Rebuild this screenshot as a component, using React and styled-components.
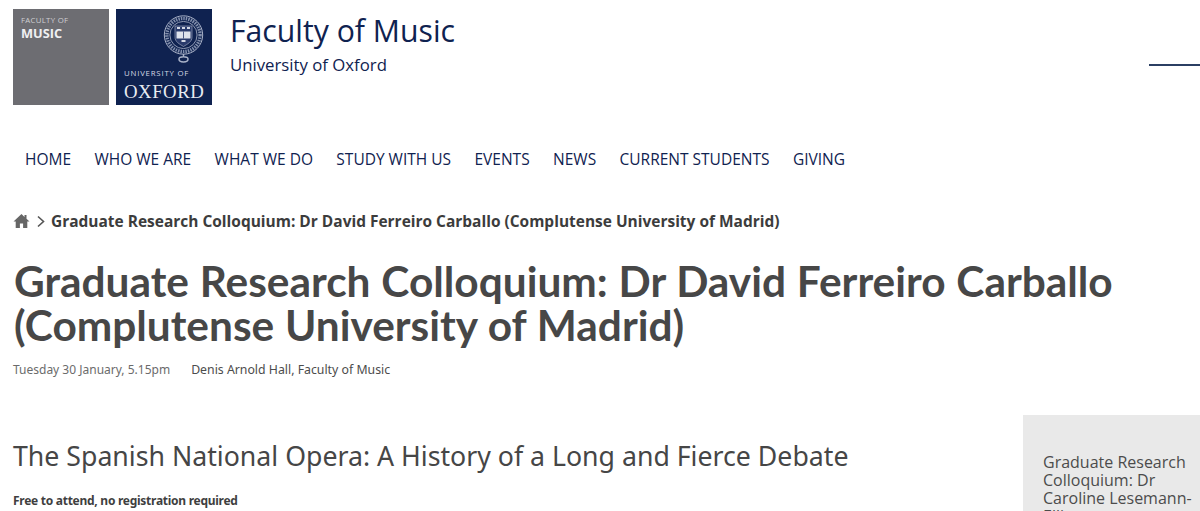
import React from "react";
import styled, { createGlobalStyle } from "styled-components";

const Global = createGlobalStyle`
  html, body {
    margin: 0;
    height: 511px;
    overflow: hidden;
    background: #fff;
    font-family: "Open Sans", sans-serif;
  }
`;

const Page = styled.div`
  width: 1200px;
  height: 511px;
  overflow: hidden;
`;

const Header = styled.header`
  display: flex;
  align-items: flex-start;
  height: 106px;
  padding: 9px 0 0 13px;
  box-sizing: border-box;
`;

const LogoTile = styled.div`
  width: 96px;
  height: 96px;
  margin-right: 7px;
  box-sizing: border-box;
  flex: none;
  background: ${({ wide }) => (wide ? "#0f2250" : "#6d6d72")};
  color: #fff;
  display: flex;
  flex-direction: column;
`;

const FacultyLine = styled.span`
  font-family: "Open Sans", sans-serif;
  font-size: 7.8px;
  line-height: 10px;
  letter-spacing: 0.3px;
  color: #cfcfd2;
  padding: 6px 0 0 8px;
`;

const MusicLine = styled.span`
  font-family: "Open Sans", sans-serif;
  font-weight: 700;
  font-size: 12.8px;
  line-height: 14px;
  color: #f0f0f2;
  padding: 1px 0 0 8px;
`;

const Crest = styled.svg`
  display: block;
  width: 41px;
  height: 48px;
  margin: 6px 0 0 47px;
`;

const UniLine = styled.span`
  font-family: "Open Sans", sans-serif;
  font-size: 7.8px;
  line-height: 9px;
  letter-spacing: 0.8px;
  color: #d5d9e4;
  padding: 6px 0 0 8px;
  white-space: nowrap;
`;

const OxfordLine = styled.span`
  font-family: "Liberation Serif", serif;
  font-size: 18.8px;
  line-height: 17px;
  letter-spacing: 0.5px;
  color: #e8ebf2;
  padding: 5px 0 0 8px;
  white-space: nowrap;
`;

const SiteTitle = styled.div`
  margin-left: 11px;
  color: #0f2250;
`;

const FacultyName = styled.div`
  font-size: 30.2px;
  line-height: 40px;
  margin-top: 2px;
`;

const UniversityName = styled.div`
  font-size: 16.75px;
  line-height: 26px;
  margin-top: 1px;
`;

const MenuBar = styled.div`
  width: 51px;
  height: 2px;
  margin: 55px 0 0 auto;
  background: #2b3f63;
`;

const Nav = styled.nav`
  display: flex;
  gap: 23.4px;
  height: 22px;
  margin-top: 42px;
  padding-left: 25px;
`;

const NavLink = styled.a`
  font-size: 15.5px;
  line-height: 22px;
  color: #0f2250;
  white-space: nowrap;
`;

const Breadcrumb = styled.div`
  display: flex;
  align-items: center;
  height: 22px;
  margin-top: 40px;
  padding-left: 13px;
`;

const HomeIcon = styled.svg`
  width: 17px;
  height: 16px;
  fill: #666;
  flex: none;
`;

const Chevron = styled.svg`
  width: 10px;
  height: 13px;
  margin: 0 5px 0 6px;
  fill: none;
  stroke: #555;
  stroke-width: 1.6;
  flex: none;
`;

const Crumb = styled.span`
  font-size: 15.48px;
  font-weight: 700;
  line-height: 22px;
  color: #3c3c3c;
  white-space: nowrap;
`;

const Title = styled.h1`
  margin: 27px 0 0;
  padding-left: 14px;
  font-family: Lato, sans-serif;
  font-size: 42.4px;
  font-weight: 700;
  word-spacing: 0.5px;
  line-height: 44px;
  color: #474747;
  white-space: nowrap;
`;

const Columns = styled.div`
  display: flex;
  align-items: flex-start;
  justify-content: space-between;
`;

const Main = styled.main`
  padding-left: 13px;
`;

const Meta = styled.div`
  display: flex;
  gap: 21px;
  margin-top: 13px;
  font-family: "Noto Sans", sans-serif;
  font-size: 12px;
  line-height: 20px;
`;

const When = styled.span`
  color: #6b6b6b;
`;

const Where = styled.span`
  font-size: 12.3px;
  color: #4c4c4c;
`;

const Subtitle = styled.h2`
  margin: 58px 0 0;
  font-family: "Noto Sans", sans-serif;
  font-size: 26.7px;
  font-weight: 400;
  line-height: 36px;
  color: #464646;
`;

const Note = styled.p`
  margin: 18px 0 0;
  font-family: "Noto Sans", sans-serif;
  font-size: 12px;
  font-weight: 700;
  letter-spacing: -0.27px;
  line-height: 18px;
  color: #3f3f3f;
`;

const Aside = styled.aside`
  width: 177px;
  height: 200px;
  margin-top: 68px;
  padding: 38px 0 0 20px;
  box-sizing: border-box;
  background: #e9e9e9;
  font-size: 16px;
  line-height: 18px;
  color: #4c4c4c;
`;

const navItems = [
  "HOME",
  "WHO WE ARE",
  "WHAT WE DO",
  "STUDY WITH US",
  "EVENTS",
  "NEWS",
  "CURRENT STUDENTS",
  "GIVING",
];

const OxfordCrest = () => (
  <Crest viewBox="0 0 41 48">
    <circle cx="20.5" cy="20" r="19.2" fill="none" stroke="#a9b2c8" strokeWidth="1" />
    <circle cx="20.5" cy="20" r="16.6" fill="none" stroke="#8390ad" strokeWidth="3.4" strokeDasharray="1.5 1" />
    <circle cx="20.5" cy="20" r="13.6" fill="none" stroke="#aeb6ca" strokeWidth="0.8" />
    <path d="M12 11h17v11c0 5-4.5 7-8.5 9.5C16.5 29 12 27 12 22z" fill="#2a3b6c" stroke="#aeb6ca" strokeWidth="0.6" />
    <rect x="13.5" y="16.5" width="14" height="7" fill="#dfe3ec" />
    <path d="M20.5 16.5v7" stroke="#2a3b6c" strokeWidth="0.8" />
    <path d="M14 13h3M19 13h3M24 13h3M18.5 26h4" stroke="#d3d8e4" strokeWidth="2" />
    <path d="M20.5 39v3M16 44c0-3 9-3 9 0s-2.5 3-4.5 3-4.5 0-4.5-3z" fill="none" stroke="#a9b2c8" strokeWidth="1.5" />
  </Crest>
);

export default function App() {
  return (
    <Page>
      <Global />
      <Header>
        <LogoTile>
          <FacultyLine>FACULTY OF</FacultyLine>
          <MusicLine>MUSIC</MusicLine>
        </LogoTile>
        <LogoTile wide>
          <OxfordCrest />
          <UniLine>UNIVERSITY OF</UniLine>
          <OxfordLine>OXFORD</OxfordLine>
        </LogoTile>
        <SiteTitle>
          <FacultyName>Faculty of Music</FacultyName>
          <UniversityName>University of Oxford</UniversityName>
        </SiteTitle>
        <MenuBar />
      </Header>
      <Nav>
        {navItems.map((item) => (
          <NavLink key={item}>{item}</NavLink>
        ))}
      </Nav>
      <Breadcrumb>
        <HomeIcon viewBox="0 0 17 16">
          <path d="M8.5 1 0.5 8.5h2.2V15h4.2v-4.4h3.2V15h4.2V8.5h2.2L13.5 5.7V2h-2v1.9z" />
        </HomeIcon>
        <Chevron viewBox="0 0 10 13">
          <path d="M2 1.5 7.5 6.5 2 11.5" />
        </Chevron>
        <Crumb>Graduate Research Colloquium: Dr David Ferreiro Carballo (Complutense University of Madrid)</Crumb>
      </Breadcrumb>
      <Title>
        Graduate Research Colloquium: Dr David Ferreiro Carballo
        <br />
        (Complutense University of Madrid)
      </Title>
      <Columns>
        <Main>
          <Meta>
            <When>Tuesday 30 January, 5.15pm</When>
            <Where>Denis Arnold Hall, Faculty of Music</Where>
          </Meta>
          <Subtitle>The Spanish National Opera: A History of a Long and Fierce Debate</Subtitle>
          <Note>Free to attend, no registration required</Note>
        </Main>
        <Aside>Graduate Research Colloquium: Dr Caroline Lesemann-Elliott</Aside>
      </Columns>
    </Page>
  );
}
